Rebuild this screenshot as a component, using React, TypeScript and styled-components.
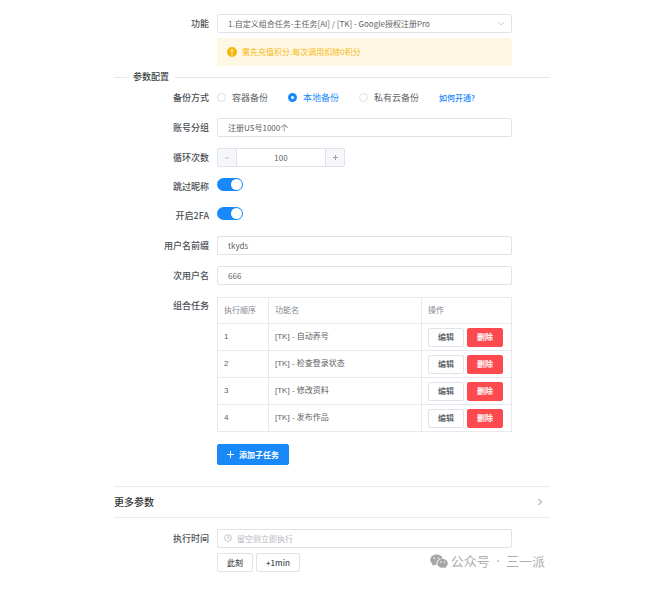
import React, { useState } from "react";
import styled, { createGlobalStyle, css } from "styled-components";

const Global = createGlobalStyle`
  *, *::before, *::after { box-sizing: border-box; }
  body {
    margin: 0;
    background: #fff;
    color: #606266;
    font: 8px/12px "Noto Sans CJK SC", sans-serif;
  }
  button, input, select { font: inherit; color: inherit; margin: 0; }
`;

const Page = styled.main`
  position: relative;
  padding: 14px 119px 36px 114px;
`;

const Row = styled.div<{ $gap?: number }>`
  display: grid;
  grid-template-columns: 95px minmax(0, 1fr);
  column-gap: 8px;
  padding-right: 38px;
  margin-bottom: ${(p) => p.$gap ?? 11}px;
`;

const labelText = css<{ $short?: boolean }>`
  font-size: 9px;
  line-height: ${(p) => (p.$short ? 18 : 19)}px;
  font-weight: 500;
  color: #4c4f55;
  text-align: right;
  white-space: nowrap;
`;
const Label = styled.label<{ $short?: boolean }>`
  ${labelText}
`;
const Caption = styled.span`
  ${labelText}
`;

const field = css`
  display: block;
  width: 100%;
  height: 19px;
  padding: 0 10px;
  border: 1px solid #dfe2e8;
  border-radius: 2px;
  background: #fff;
  outline: none;
`;
const TextInput = styled.input<{ $icon?: boolean }>`
  ${field}
  ${(p) => p.$icon && "padding-left: 19px;"}
  &::placeholder { color: #b4b7be; opacity: 1; }
`;
const FieldBox = styled.div`
  position: relative;
`;
const Select = styled.select`
  ${field}
  appearance: none;
`;
const ArrowIcon = styled.svg`
  position: absolute;
  right: 7px;
  top: 6px;
  pointer-events: none;
`;
const ClockIcon = styled.svg`
  position: absolute;
  left: 7px;
  top: 5px;
`;

const Alert = styled.div`
  display: flex;
  align-items: center;
  gap: 5px;
  height: 28px;
  padding: 0 10px;
  margin-top: 5px;
  border-radius: 2px;
  background: #fef7e4;
  color: #f5b70f;
`;

const Divider = styled.div`
  display: flex;
  align-items: center;
  gap: 6px;
  height: 12px;
  margin-bottom: 5px;
  font-size: 9px;
  font-weight: 500;
  color: #3c3f44;
  &::before, &::after { content: ""; height: 1px; background: #e4e5e8; }
  &::before { width: 13px; }
  &::after { flex: 1; }
`;

const RadioGroup = styled.div`
  display: flex;
  align-items: center;
  height: 19px;
  gap: 20px;
  font-size: 9px;
  white-space: nowrap;
`;
const RadioLabel = styled.label<{ $on: boolean }>`
  display: flex;
  align-items: center;
  gap: 6px;
  color: ${(p) => (p.$on ? "#1989fa" : "#606266")};
`;
const Radio = styled.input`
  appearance: none;
  width: 9px;
  height: 9px;
  border: 1px solid #dcdfe6;
  border-radius: 50%;
  background: #fff;
  &:checked { border: 3px solid #1989fa; }
`;
const Link = styled.a`
  font-size: 8px;
  font-weight: 500;
  color: #1989fa;
  text-decoration: none;
`;

const Stepper = styled.div`
  display: flex;
  width: 128px;
  height: 19px;
  border: 1px solid #dfe2e8;
  border-radius: 2px;
  overflow: hidden;
`;
const StepButton = styled.button`
  display: grid;
  place-items: center;
  width: 18px;
  padding: 0;
  border: 0;
  background: #f5f7fa;
  color: #a8abb2;
`;
const StepInput = styled.input`
  flex: 1;
  min-width: 0;
  padding: 0;
  border: solid #dfe2e8;
  border-width: 0 1px;
  text-align: center;
  outline: none;
`;

const Switch = styled.input`
  appearance: none;
  display: block;
  width: 26px;
  height: 13px;
  padding: 1px;
  border-radius: 7px;
  background: #dcdfe6;
  &::before {
    content: "";
    display: block;
    width: 11px;
    height: 11px;
    border-radius: 50%;
    background: #fff;
  }
  &:checked { background: #1989fa; }
  &:checked::before { margin-left: auto; }
`;

const Table = styled.table`
  width: 100%;
  margin-top: 1px;
  table-layout: fixed;
  border-collapse: collapse;
  font-family: "Liberation Sans", "Noto Sans CJK SC", sans-serif;
  th, td {
    height: 27px;
    padding: 0 6px;
    border: 1px solid #e6e9ef;
    text-align: left;
    white-space: nowrap;
  }
  th { height: 26px; font-weight: 400; color: #85888f; }
`;
const Col = styled.col<{ $w?: number }>`
  ${(p) => p.$w && `width: ${p.$w}px;`}
`;
const Actions = styled.div`
  display: flex;
  gap: 3px;
`;

const Button = styled.button<{ $kind?: "primary" | "danger" }>`
  display: inline-flex;
  align-items: center;
  justify-content: center;
  gap: 5px;
  height: 19px;
  min-width: 36px;
  padding: 0 9px;
  border: 1px solid #e0e3e9;
  border-radius: 2px;
  background: #fff;
  color: #4c4f55;
  font-family: "Noto Sans CJK SC", sans-serif;
  font-weight: 500;
  white-space: nowrap;
  ${(p) => p.$kind === "primary" && "height: 21px; background: #1989fa; border-color: #1989fa; color: #fff; font-weight: 700;"}
  ${(p) => p.$kind === "danger" && "background: #fc4a4e; border-color: #fc4a4e; color: #fff; font-weight: 700;"}
`;
const AddBar = styled.div`
  display: flex;
  margin-top: 12px;
`;

const More = styled.button`
  display: flex;
  align-items: center;
  justify-content: space-between;
  width: 100%;
  height: 32px;
  margin-bottom: 11px;
  padding: 0 7px 0 0;
  border: solid #e8eaee;
  border-width: 1px 0;
  background: none;
  color: #303133;
  font-size: 10px;
  font-weight: 500;
`;

const QuickBar = styled.div`
  display: flex;
  gap: 3px;
  margin-top: 5px;
`;

const Watermark = styled.div`
  position: absolute;
  right: 124px;
  bottom: 38px;
  display: flex;
  align-items: center;
  gap: 3px;
  height: 18px;
  color: #aeaeae;
  font: 13px/18px "Noto Sans", "Noto Sans CJK SC", sans-serif;
  white-space: nowrap;
`;
const Dot = styled.span`
  padding: 0 3px;
`;

const tasks = ["自动养号", "检查登录状态", "修改资料", "发布作品"];
const modes = ["容器备份", "本地备份", "私有云备份"];

export default function App() {
  const [mode, setMode] = useState(modes[1]);
  const [count, setCount] = useState(100);
  return (
    <>
      <Global />
      <Page>
        <Row $gap={5}>
          <Label htmlFor="feature">功能</Label>
          <div>
            <FieldBox>
              <Select id="feature">
                <option>1.自定义组合任务-主任务[AI] / [TK] - Google授权注册Pro</option>
              </Select>
              <ArrowIcon width="8" height="7" viewBox="0 0 8 7" fill="none" stroke="#c0c4cc" strokeWidth="0.8">
                <path d="M0.5 1.500 4 5 7.500 1.500" />
              </ArrowIcon>
            </FieldBox>
            <Alert role="alert">
              <svg width="10" height="10" viewBox="0 0 10 10">
                <circle cx="5" cy="5" r="5" fill="#f5b70f" />
                <path d="M5 2v3.800M5 7v1.100" stroke="#fff" strokeWidth="1.1" />
              </svg>
              <span>需先充值积分.每次调用扣除0积分</span>
            </Alert>
          </div>
        </Row>

        <Divider>参数配置</Divider>

        <Row>
          <Caption>备份方式</Caption>
          <RadioGroup role="radiogroup" aria-label="备份方式">
            {modes.map((m) => (
              <RadioLabel key={m} $on={m === mode}>
                <Radio type="radio" name="mode" checked={m === mode} onChange={() => setMode(m)} />
                {m}
              </RadioLabel>
            ))}
            <Link href="#help">如何开通?</Link>
          </RadioGroup>
        </Row>
        <Row>
          <Label htmlFor="group">账号分组</Label>
          <TextInput id="group" defaultValue="注册US号1000个" />
        </Row>
        <Row>
          <Label htmlFor="loops">循环次数</Label>
          <Stepper>
            <StepButton aria-label="减少" onClick={() => setCount(count - 1)}>
              <svg width="6" height="6" viewBox="0 0 6 6" stroke="#c4c7ce"><path d="M1 3h4" /></svg>
            </StepButton>
            <StepInput id="loops" value={count} onChange={(e) => setCount(Number(e.target.value) || 0)} />
            <StepButton aria-label="增加" onClick={() => setCount(count + 1)}>
              <svg width="5" height="5" viewBox="0 0 5 5" stroke="#9da1a9"><path d="M0 2.500h5M2.500 0v5" /></svg>
            </StepButton>
          </Stepper>
        </Row>
        <Row>
          <Label $short htmlFor="skip">跳过昵称</Label>
          <Switch id="skip" type="checkbox" role="switch" defaultChecked />
        </Row>
        <Row>
          <Label $short htmlFor="twofa">开启2FA</Label>
          <Switch id="twofa" type="checkbox" role="switch" defaultChecked />
        </Row>
        <Row>
          <Label htmlFor="prefix">用户名前缀</Label>
          <TextInput id="prefix" defaultValue="tkyds" />
        </Row>
        <Row>
          <Label htmlFor="second">次用户名</Label>
          <TextInput id="second" defaultValue="666" />
        </Row>
        <Row $gap={21}>
          <Caption>组合任务</Caption>
          <div>
            <Table>
              <colgroup>
                <Col $w={51} />
                <Col />
                <Col $w={90} />
              </colgroup>
              <thead>
                <tr><th>执行顺序</th><th>功能名</th><th>操作</th></tr>
              </thead>
              <tbody>
                {tasks.map((t, i) => (
                  <tr key={t}>
                    <td>{i + 1}</td>
                    <td>[TK] - {t}</td>
                    <td>
                      <Actions>
                        <Button>编辑</Button>
                        <Button $kind="danger">删除</Button>
                      </Actions>
                    </td>
                  </tr>
                ))}
              </tbody>
            </Table>
            <AddBar>
              <Button $kind="primary">
                <svg width="7" height="7" viewBox="0 0 7 7" stroke="#fff"><path d="M0 3.500h7M3.500 0v7" /></svg>
                添加子任务
              </Button>
            </AddBar>
          </div>
        </Row>

        <More>
          更多参数
          <svg width="6" height="8" viewBox="0 0 6 8" fill="none" stroke="#85888f"><path d="M1.500 1 4.500 4l-3 3" /></svg>
        </More>

        <Row $gap={0}>
          <Label htmlFor="time">执行时间</Label>
          <div>
            <FieldBox>
              <TextInput id="time" $icon placeholder="留空则立即执行" />
              <ClockIcon width="8" height="8" viewBox="0 0 8 8" fill="none" stroke="#b4b7be" strokeWidth="0.8">
                <circle cx="4" cy="4" r="3.4" />
                <path d="M4 1.800v2.400h1.800" />
              </ClockIcon>
            </FieldBox>
            <QuickBar>
              <Button>此刻</Button>
              <Button>+1min</Button>
            </QuickBar>
          </div>
        </Row>

        <Watermark>
          <svg width="18" height="15" viewBox="0 0 18 15">
            <path fill="#a6a6a6" d="M6.600.5C3 .5.2 2.800.2 5.800c0 1.700.9 3.100 2.300 4.100L2 11.800l2.200-1.100c.8.200 1.500.300 2.400.300-.9-3.900 2.200-6.700 6.100-6.600C12 2.100 9.600.5 6.600.5z" />
            <path fill="#a6a6a6" d="M17.800 9.400c0-2.400-2.300-4.400-5.200-4.400s-5.200 2-5.200 4.400 2.300 4.400 5.200 4.400c.6 0 1.200-.1 1.700-.2l1.800 1-.5-1.600c1.300-.8 2.200-2.100 2.200-3.600z" />
            <g fill="#fff">
              <circle cx="4.400" cy="4" r="0.800" />
              <circle cx="8.600" cy="4" r="0.800" />
              <circle cx="10.900" cy="8" r="0.700" />
              <circle cx="14.300" cy="8" r="0.700" />
            </g>
          </svg>
          <span>公众号 <Dot>·</Dot> 三一派</span>
        </Watermark>
      </Page>
    </>
  );
}
